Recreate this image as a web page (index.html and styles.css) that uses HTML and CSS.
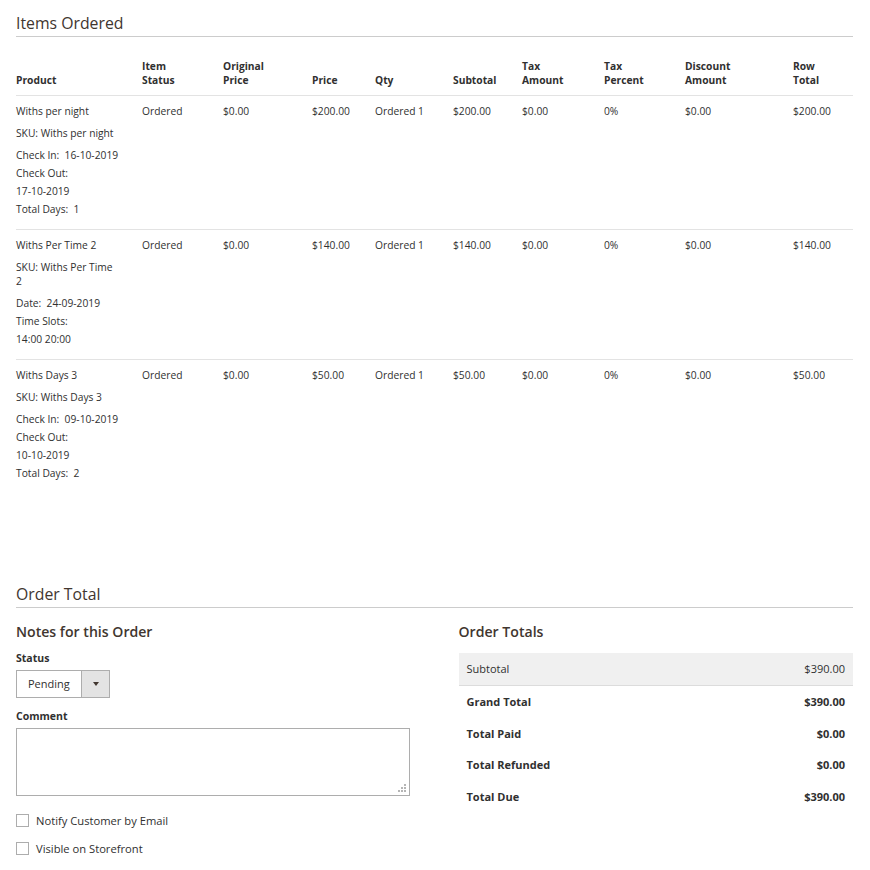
FILE: index.html
```html
<!DOCTYPE html>
<html>
<head>
<meta charset="utf-8">
<link rel="stylesheet" href="styles.css">
</head>
<body>
<div class="page">
  <section class="section items">
    <h2 class="section-title">Items Ordered</h2>
    <table class="items-table">
      <colgroup>
        <col class="c-product"><col class="c-status"><col class="c-orig"><col class="c-price"><col class="c-qty"><col class="c-sub"><col class="c-tax"><col class="c-taxp"><col class="c-disc"><col class="c-row">
      </colgroup>
      <thead>
        <tr>
          <th>Product</th><th>Item<br>Status</th><th>Original<br>Price</th><th>Price</th><th>Qty</th><th>Subtotal</th><th>Tax<br>Amount</th><th>Tax<br>Percent</th><th>Discount<br>Amount</th><th>Row<br>Total</th>
        </tr>
      </thead>
      <tbody>
        <tr>
          <td>
            <div class="p-name">Withs per night</div>
            <div class="p-sku">SKU: Withs per night</div>
            <div class="p-opt">Check In:&nbsp; 16-10-2019</div>
            <div class="p-opt">Check Out:</div>
            <div class="p-opt">17-10-2019</div>
            <div class="p-opt">Total Days:&nbsp; 1</div>
          </td>
          <td>Ordered</td><td>$0.00</td><td>$200.00</td><td>Ordered 1</td><td>$200.00</td><td>$0.00</td><td>0%</td><td>$0.00</td><td>$200.00</td>
        </tr>
        <tr>
          <td>
            <div class="p-name">Withs Per Time 2</div>
            <div class="p-sku">SKU: Withs Per Time<br>2</div>
            <div class="p-opt">Date:&nbsp; 24-09-2019</div>
            <div class="p-opt">Time Slots:</div>
            <div class="p-opt">14:00 20:00</div>
          </td>
          <td>Ordered</td><td>$0.00</td><td>$140.00</td><td>Ordered 1</td><td>$140.00</td><td>$0.00</td><td>0%</td><td>$0.00</td><td>$140.00</td>
        </tr>
        <tr class="last">
          <td>
            <div class="p-name">Withs Days 3</div>
            <div class="p-sku">SKU: Withs Days 3</div>
            <div class="p-opt">Check In:&nbsp; 09-10-2019</div>
            <div class="p-opt">Check Out:</div>
            <div class="p-opt">10-10-2019</div>
            <div class="p-opt">Total Days:&nbsp; 2</div>
          </td>
          <td>Ordered</td><td>$0.00</td><td>$50.00</td><td>Ordered 1</td><td>$50.00</td><td>$0.00</td><td>0%</td><td>$0.00</td><td>$50.00</td>
        </tr>
      </tbody>
    </table>
  </section>

  <section class="section totals-section">
    <h2 class="section-title">Order Total</h2>
    <div class="two-col">
      <div class="col">
        <h3 class="sub-title">Notes for this Order</h3>
        <div class="field-label">Status</div>
        <div class="select">
          <span class="select-value">Pending</span>
          <span class="select-btn"><span class="arrow"></span></span>
        </div>
        <div class="field-label comment-label">Comment</div>
        <div class="textarea">
          <svg class="grip" width="8" height="8" viewBox="0 0 8 8"><rect x="6" y="0" width="2" height="2" fill="#b5b5b5"/><rect x="3" y="3" width="2" height="2" fill="#b5b5b5"/><rect x="6" y="3" width="2" height="2" fill="#b5b5b5"/><rect x="0" y="6" width="2" height="2" fill="#b5b5b5"/><rect x="3" y="6" width="2" height="2" fill="#b5b5b5"/><rect x="6" y="6" width="2" height="2" fill="#b5b5b5"/></svg>
        </div>
        <div class="checks">
          <div class="check-row"><span class="checkbox"></span><span>Notify Customer by Email</span></div>
          <div class="check-row"><span class="checkbox"></span><span>Visible on Storefront</span></div>
        </div>
      </div>
      <div class="col">
        <h3 class="sub-title">Order Totals</h3>
        <div class="totals">
          <div class="t-row t-sub"><span>Subtotal</span><span>$390.00</span></div>
          <div class="t-row t-strong"><span>Grand Total</span><span>$390.00</span></div>
          <div class="t-row t-strong"><span>Total Paid</span><span>$0.00</span></div>
          <div class="t-row t-strong"><span>Total Refunded</span><span>$0.00</span></div>
          <div class="t-row t-strong"><span>Total Due</span><span>$390.00</span></div>
        </div>
      </div>
    </div>
  </section>
</div>
</body>
</html>
```

FILE: styles.css
```css
* { box-sizing: border-box; }
html, body { margin: 0; padding: 0; background: #fff; }
body {
  font-family: "Open Sans", "Liberation Sans", sans-serif;
  color: #303030;
  font-size: 10.25px;
}
.page { padding: 0 17px 0 16px; }

.section-title {
  margin: 0;
  font-size: 15.8px;
  font-weight: 400;
  color: #41362f;
  line-height: 22px;
  padding-top: 12px;
  padding-bottom: 2px;
  border-bottom: 1px solid #cccccc;
}

.items-table {
  width: 100%;
  border-collapse: collapse;
  table-layout: fixed;
  margin-top: 22px;
}
.c-product { width: 126px; }
.c-status { width: 81px; }
.c-orig { width: 89px; }
.c-price { width: 63px; }
.c-qty { width: 78px; }
.c-sub { width: 69px; }
.c-tax { width: 82px; }
.c-taxp { width: 81px; }
.c-disc { width: 108px; }
.c-row { width: 60px; }

.items-table th {
  text-align: left;
  vertical-align: bottom;
  font-weight: 700;
  font-size: 10.25px;
  line-height: 14px;
  padding: 0 0 8px 0;
  color: #303030;
  border-bottom: 1px solid #e3e3e3;
}
.items-table td {
  vertical-align: top;
  padding: 8px 0 13px 0;
  line-height: 14px;
  border-bottom: 1px solid #e3e3e3;
}
.items-table tr.last td { border-bottom: none; }

.p-name { margin-bottom: 8px; }
.p-sku { margin-bottom: 8px; }
.p-opt { margin-bottom: 4px; }
.p-opt:last-child { margin-bottom: 0; }

.totals-section { margin-top: 78px; }

.two-col {
  display: grid;
  grid-template-columns: 1fr 1fr;
  column-gap: 48px;
}
.sub-title {
  margin: 14px 0 0 0;
  font-size: 14.1px;
  font-weight: 600;
  line-height: 20px;
  color: #41362f;
}
.field-label {
  font-weight: 700;
  font-size: 10.5px;
  line-height: 14px;
  margin-top: 9px;
}
.select {
  display: flex;
  width: 94px;
  height: 28px;
  margin-top: 5px;
  border: 1px solid #adadad;
  background: #fff;
}
.select-value {
  flex: 1;
  padding-left: 11px;
  line-height: 26px;
  font-size: 11px;
}
.select-btn {
  width: 28px;
  background: #e3e3e3;
  border-left: 1px solid #adadad;
  display: flex;
  align-items: center;
  justify-content: center;
}
.arrow {
  width: 0; height: 0;
  border-left: 3px solid transparent;
  border-right: 3px solid transparent;
  border-top: 4px solid #41362f;
}
.comment-label { margin-top: 11px; }
.textarea {
  position: relative;
  width: 394px;
  height: 68px;
  margin-top: 5px;
  border: 1px solid #adadad;
}
.grip { position: absolute; right: 3px; bottom: 3px; }

.checks {
  display: flex;
  flex-direction: column;
  gap: 14px;
  margin-top: 17px;
}
.check-row {
  display: flex;
  align-items: center;
  gap: 7px;
  height: 14px;
  font-size: 11.2px;
}
.checkbox {
  width: 13px; height: 13px;
  border: 1px solid #adadad;
  background: #fff;
}

.totals { margin-top: 11px; }
.t-row {
  display: flex;
  justify-content: space-between;
  padding: 0 8px;
  line-height: 14px;
  height: 31.7px;
  align-items: center;
  font-size: 11px;
}
.t-sub {
  background: #f0f0f0;
  height: 33px;
  border-bottom: 1px solid #dcdcdc;
}
.t-strong { font-weight: 700; }
```
